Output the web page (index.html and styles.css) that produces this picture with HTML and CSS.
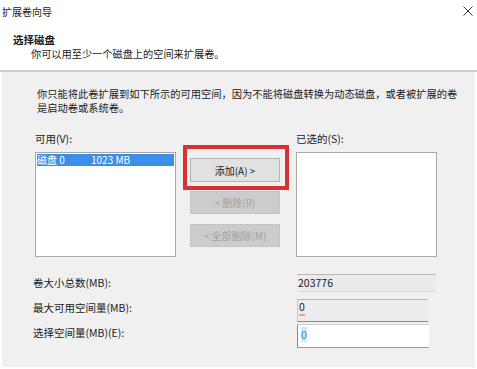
FILE: index.html
```html
<!DOCTYPE html>
<html lang="zh-CN">
<head>
    <meta charset="UTF-8">
    <title>扩展卷向导</title>
    <link rel="stylesheet" href="styles.css">
</head>
<body>
    <div class="wizard">
        <div class="titlebar">
            <span class="title">扩展卷向导</span>
            <svg class="close" width="10" height="10" viewBox="0 0 10 10">
                <path d="M0.5 0.5 L9.5 9.5 M9.5 0.5 L0.5 9.5" stroke="#333" stroke-width="1" fill="none"/>
            </svg>
        </div>

        <div class="header">
            <div class="step">选择磁盘</div>
            <div class="step-desc">你可以用至少一个磁盘上的空间来扩展卷。</div>
        </div>

        <div class="content">
            <p class="desc">你只能将此卷扩展到如下所示的可用空间，因为不能将磁盘转换为动态磁盘，或者被扩展的卷<br>是启动卷或系统卷。</p>

            <div class="columns">
                <div class="col">
                    <div class="label">可用(V):</div>
                    <div class="listbox">
                        <div class="item selected"><span class="disk">磁盘 0</span><span>1023 MB</span></div>
                    </div>
                </div>

                <div class="col-mid">
                    <div class="highlight">
                        <button class="btn">添加(A) &gt;</button>
                    </div>
                    <button class="btn disabled">&lt; 删除(R)</button>
                    <button class="btn disabled">&lt; 全部删除(M)</button>
                </div>

                <div class="col">
                    <div class="label">已选的(S):</div>
                    <div class="listbox"></div>
                </div>
            </div>

            <div class="form">
                <div class="form-label">卷大小总数(MB):</div>
                <div class="field readonly">203776</div>

                <div class="form-label">最大可用空间量(MB):</div>
                <div class="field readonly tall"><span class="val">0</span></div>

                <div class="form-label">选择空间量(MB)(E):</div>
                <div class="field input"><span class="sel">0</span></div>
            </div>
        </div>
    </div>
</body>
</html>
```

FILE: styles.css
```css
html, body {
    margin: 0;
    padding: 0;
    background: #fff;
}

body {
    font-family: "Noto Sans CJK SC", "Noto Sans", sans-serif;
    color: #1a1a1a;
}

.wizard {
    width: 477px;
    height: 369px;
    display: flex;
    flex-direction: column;
    overflow: hidden;
}

.titlebar {
    height: 22px;
    display: flex;
    align-items: center;
    justify-content: space-between;
    padding: 0 4px 2px 2px;
    font-size: 10px;
    color: #222;
}

.header {
    padding: 9px 0 9px 13px;
    border-bottom: 2px solid #cdcdcd;
    font-size: 10.5px;
    line-height: 14px;
}

.step {
    font-weight: bold;
}

.step-desc {
    padding-left: 18px;
    font-size: 10.2px;
}

.content {
    flex: 1;
    margin: 0 2px 2px 2px;
    background: #f0f0f0;
    padding: 15px 0 0 33px;
    font-size: 10.5px;
}

/* 41 glyphs must fit between x 35 and x 455 */
.desc {
    margin: 0 0 0 2px;
    line-height: 14px;
    font-size: 10.25px;
    white-space: nowrap;
}

.columns {
    display: flex;
    gap: 7px;
    margin-top: 17px;
}

.col {
    width: 141px;
}

.label {
    line-height: 14px;
    margin-bottom: 6px;
}

.listbox {
    height: 102px;
    background: #fff;
    border: 1px solid #a9a9a9;
    padding: 1px 1px 0 1px;
}

.item {
    height: 12px;
    line-height: 12px;
    font-size: 10px;
    display: flex;
}

.item.selected {
    background: #3d8ee6;
    color: #fff;
}

.disk {
    width: 54px;
}

.col-mid {
    width: 106px;
    padding-top: 13px;
    display: flex;
    flex-direction: column;
    align-items: flex-start;
}

.highlight {
    border: 4px solid #db2f36;
    padding: 9px 5px 4px 3px;
}

.btn {
    width: 90px;
    height: 24px;
    font-family: inherit;
    font-size: 10px;
    color: #1a1a1a;
    background: #e1e1e1;
    border: 1px solid #b4b4b4;
    padding: 0;
}

.btn.disabled {
    height: 23px;
    margin-left: 7px;
    margin-top: 1px;
    background: #cccccc;
    border-color: #c4c4c4;
    color: #a2a2a2;
}

.btn.disabled + .btn.disabled {
    margin-top: 10px;
}

.form {
    display: grid;
    grid-template-columns: 262px 141px;
    grid-auto-rows: 25px;
    margin-top: 17px;
    margin-left: -2px;
}

.form-label {
    line-height: 18px;
}

.field {
    font-size: 10.5px;
    line-height: 16px;
    padding-left: 1px;
    margin-left: 2px;
}

.field.readonly {
    height: 16px;
    background: #ebebeb;
    border-top: 1px solid #b9b9b9;
    border-bottom: 1px solid #dadada;
}

.field.tall {
    height: 21px;
    line-height: 14px;
    background: #ededed;
    border-left: 1px solid #9fd2f0;
    border-bottom: 1px solid #8a8a8a;
    width: 129px;
}

.val {
    border-bottom: 2px solid #eea27a;
}

.field.input {
    width: 128px;
    height: 22px;
    background: #fff;
    border-top: 1px solid #cfcfcf;
    border-bottom: 1px solid #9a9a9a;
    border-left: 1px solid #3fa0e0;
    line-height: 20px;
    padding-left: 3px;
}

.sel {
    color: #1f8fd6;
    background: #cfe8f8;
}
```
